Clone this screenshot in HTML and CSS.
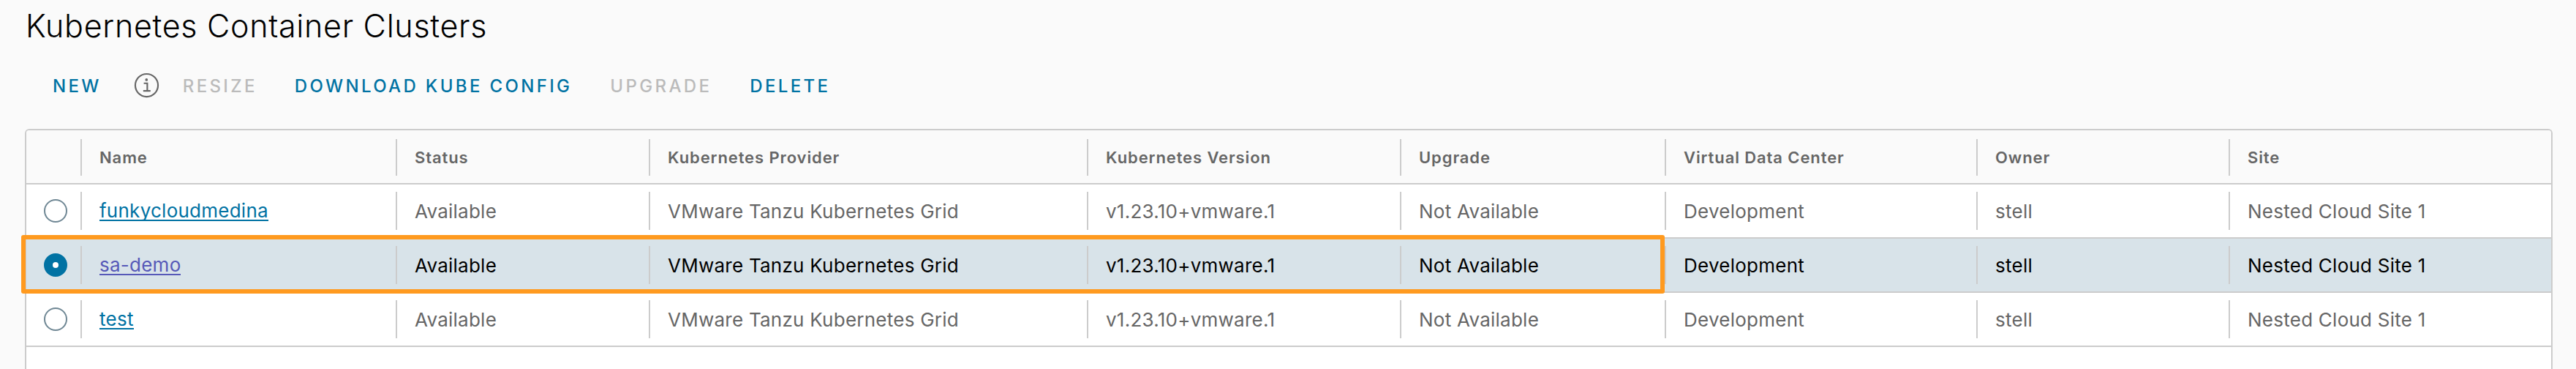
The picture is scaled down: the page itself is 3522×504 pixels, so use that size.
FILE: index.html
```html
<!DOCTYPE html>
<html lang="en">
<head>
<meta charset="utf-8">
<title>Kubernetes Container Clusters</title>
<link rel="stylesheet" href="styles.css">
</head>
<body>
<h1 class="title">Kubernetes Container Clusters</h1>
<div class="toolbar">
  <button class="action act-new">New</button>
  <svg class="info" viewBox="0 0 36 36" aria-hidden="true"><circle cx="18" cy="18" r="16" fill="none" stroke="#666" stroke-width="2.2"/><circle cx="17.8" cy="10.2" r="1.9" fill="#666"/><path d="M14 15.2h4.9v10.4M13.2 25.8h10.2" fill="none" stroke="#666" stroke-width="2.2"/></svg>
  <button class="action off act-resize">Resize</button>
  <button class="action act-dl">Download Kube Config</button>
  <button class="action off act-up">Upgrade</button>
  <button class="action">Delete</button>
</div>
<div class="table">
  <div class="row head">
    <div class="cell"></div><div class="cell">Name</div><div class="cell">Status</div><div class="cell">Kubernetes Provider</div><div class="cell">Kubernetes Version</div><div class="cell">Upgrade</div><div class="cell">Virtual Data Center</div><div class="cell">Owner</div><div class="cell">Site</div>
  </div>
  <div class="row">
    <div class="cell"><span class="radio"></span></div><div class="cell"><a class="link">funkycloudmedina</a></div><div class="cell">Available</div><div class="cell">VMware Tanzu Kubernetes Grid</div><div class="cell">v1.23.10+vmware.1</div><div class="cell">Not Available</div><div class="cell">Development</div><div class="cell">stell</div><div class="cell">Nested Cloud Site 1</div>
  </div>
  <div class="row selected">
    <div class="cell"><span class="radio on"></span></div><div class="cell"><a class="link visited">sa-demo</a></div><div class="cell">Available</div><div class="cell">VMware Tanzu Kubernetes Grid</div><div class="cell">v1.23.10+vmware.1</div><div class="cell">Not Available</div><div class="cell">Development</div><div class="cell">stell</div><div class="cell">Nested Cloud Site 1</div>
    <div class="frame"></div>
  </div>
  <div class="row">
    <div class="cell"><span class="radio"></span></div><div class="cell"><a class="link">test</a></div><div class="cell">Available</div><div class="cell">VMware Tanzu Kubernetes Grid</div><div class="cell">v1.23.10+vmware.1</div><div class="cell">Not Available</div><div class="cell">Development</div><div class="cell">stell</div><div class="cell">Nested Cloud Site 1</div>
  </div>
</div>
</body>
</html>
```
FILE: styles.css
```css
html, body {
  margin: 0;
  height: 504px;
  overflow: hidden;
  background: #fafafa;
  font-family: Inter, "Noto Sans", sans-serif;
}
.title {
  margin: 0;
  padding: 12px 0 0 35px;
  font-size: 43px;
  line-height: 46px;
  font-weight: 300;
  letter-spacing: 0.7px;
  color: #000;
}
.toolbar {
  display: flex;
  align-items: center;
  height: 48px;
  margin-top: 35px;
  padding-left: 72px;
  gap: 52px;
}
.action {
  border: 0;
  padding: 2px 0 0;
  background: none;
  font: 500 24px/1 Inter, "Noto Sans", sans-serif;
  letter-spacing: 3.35px;
  text-transform: uppercase;
  color: #0072a3;
}
.action.off { color: #bbb; }
.info { width: 35px; height: 35px; margin: 0 -20px 2px -8px; }
.act-dl { margin-left: -1px; }
.table {
  margin: 35px 32px 0 34px;
  height: 326px;
  border: 2px solid #ccc;
  border-bottom: 0;
  border-radius: 6px 6px 0 0;
  background: #fff;
}
.row {
  position: relative;
  display: grid;
  grid-template-columns: 74px 431px 346px 599px 428px 362px 426px 345px 441px;
  height: 72px;
  border-bottom: 2px solid #ccc;
  font-size: 26px;
  font-weight: 380;
  letter-spacing: 0.25px;
  color: #666;
}
.head {
  background: #fafafa;
  border-radius: 4px 4px 0 0;
  font-size: 22px;
  font-weight: 600;
  letter-spacing: 0.9px;
}
.selected { background: #d8e3e9; color: #000; }
.cell {
  position: relative;
  display: flex;
  align-items: center;
  padding-left: 26px;
  white-space: nowrap;
}
.head .cell { padding-top: 2px; }
.cell:first-child { padding-left: 24px; }
.cell + .cell::before {
  content: "";
  position: absolute;
  left: 0;
  top: 10px;
  bottom: 10px;
  width: 2px;
  background: #ccc;
}
.head .cell + .cell::before { top: 12px; }
.link {
  padding-top: 2px;
  color: #0072a3;
  line-height: 24px;
  border-bottom: 2px solid currentColor;
}
.link.visited { color: #5659b8; }
.radio {
  box-sizing: border-box;
  width: 32px;
  height: 32px;
  border: 2px solid #6f8794;
  border-radius: 50%;
  background: #fff;
}
.radio.on {
  border: 12px solid #0072a3;
  background: #fff;
}
.frame {
  position: absolute;
  left: -7px;
  top: -5px;
  box-sizing: border-box;
  width: 2247px;
  height: 80px;
  border: 6px solid #ff9a1f;
  border-radius: 3px;
}
```
